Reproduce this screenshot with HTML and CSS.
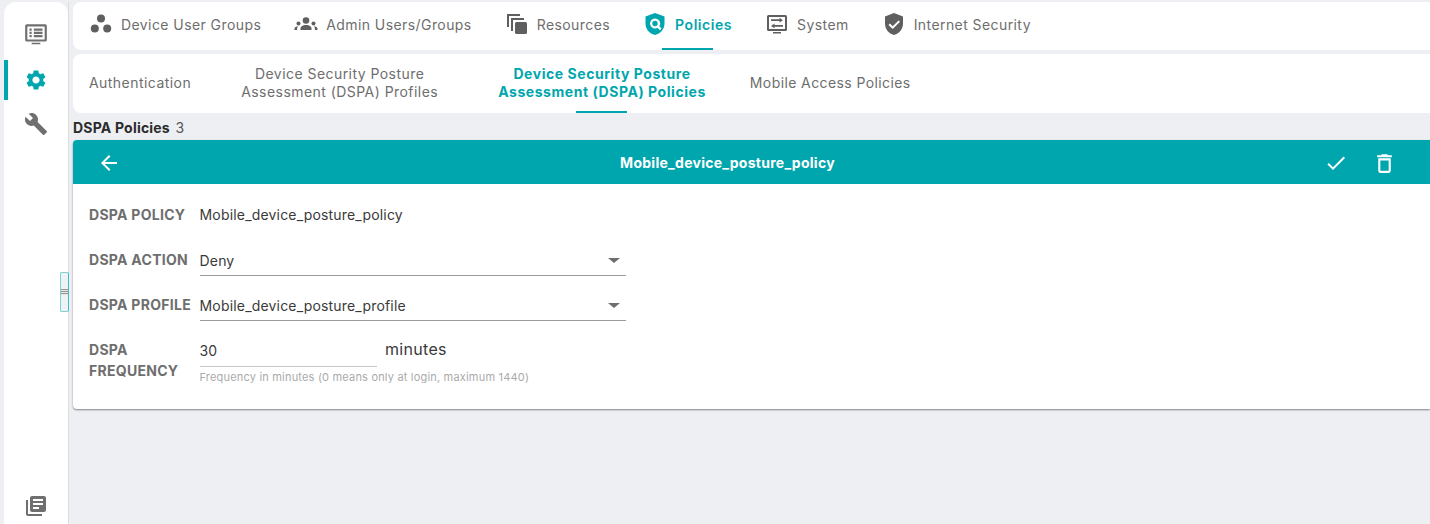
FILE: index.html
```html
<!DOCTYPE html>
<html lang="en">
<head>
  <meta charset="UTF-8" />
  <title>DSPA Policies</title>
  <link rel="stylesheet" href="styles.css">
</head>
<body>

<aside class="sidebar">
  <div class="side-top">
    <a class="side-item">
      <svg class="side-icon wide" viewBox="0 0 24 24"><path d="M3.500 3h17A1.500 1.500 0 0 1 22 4.500v13a1.500 1.500 0 0 1-1.500 1.500h-17A1.500 1.500 0 0 1 2 17.500v-13A1.500 1.500 0 0 1 3.500 3zM4 5v12h16V5zM6 7h2v2H6zM10 7h8v2h-8zM6 10h2v2H6zM10 10h8v2h-8zM6 13h2v2H6zM10 13h8v2h-8zM8 20h8v1.500H8z"/></svg>
    </a>
    <a class="side-item active">
      <svg class="side-icon" viewBox="0 0 24 24"><path d="M19.140 12.940c.04-.3.06-.61.06-.94 0-.32-.02-.64-.07-.94l2.030-1.580c.18-.14.23-.41.12-.61l-1.920-3.320c-.12-.22-.37-.29-.59-.22l-2.390.96c-.5-.38-1.030-.7-1.620-.94l-.36-2.540c-.04-.24-.24-.41-.48-.41h-3.840c-.24 0-.43.17-.47.41l-.36 2.540c-.59.24-1.130.57-1.620.94l-2.390-.96c-.22-.08-.47 0-.59.22L2.740 8.870c-.12.21-.08.47.12.61l2.030 1.580c-.05.3-.09.63-.09.94s.02.64.07.94l-2.030 1.580c-.18.14-.23.41-.12.61l1.920 3.320c.12.22.37.29.59.22l2.390-.96c.5.38 1.030.7 1.620.94l.36 2.540c.05.24.24.41.48.41h3.840c.24 0 .44-.17.47-.41l.36-2.540c.59-.24 1.130-.56 1.620-.94l2.390.96c.22.08.47 0 .59-.22l1.920-3.320c.12-.22.07-.47-.12-.61l-2.010-1.580zM12 15.600c-1.980 0-3.600-1.620-3.600-3.600s1.620-3.600 3.600-3.600 3.600 1.620 3.600 3.600-1.620 3.600-3.600 3.600z"/></svg>
    </a>
    <a class="side-item">
      <svg class="side-icon" viewBox="0 0 24 24"><path d="M22.700 19l-9.100-9.100c.9-2.300.4-5-1.500-6.900-2-2-5-2.400-7.400-1.300L9 6 6 9 1.600 4.700C.4 7.100.9 10.100 2.900 12.100c1.900 1.900 4.600 2.400 6.900 1.500l9.100 9.100c.4.4 1 .4 1.400 0l2.300-2.300c.5-.4.5-1.100.1-1.400z"/></svg>
    </a>
  </div>
  <a class="side-item side-bottom">
    <svg class="side-icon" viewBox="0 0 24 24"><path d="M4 6H2v14c0 1.100.9 2 2 2h14v-2H4V6zm16-4H8c-1.100 0-2 .9-2 2v12c0 1.100.9 2 2 2h12c1.100 0 2-.9 2-2V4c0-1.100-.9-2-2-2zm-1 9H9V9h10v2zm-4 4H9v-2h6v2zm4-8H9V5h10v2z"/></svg>
  </a>
  <div class="handle"><span></span></div>
</aside>

<main class="main">
  <nav class="topnav">
    <a class="top-tab">
      <svg class="top-icon" viewBox="0 0 24 24"><circle cx="12" cy="6.500" r="4"/><circle cx="5.800" cy="16.500" r="4"/><circle cx="18.200" cy="16.500" r="4"/></svg>
      Device User Groups
    </a>
    <a class="top-tab">
      <svg class="top-icon" viewBox="0 0 24 24"><circle cx="12" cy="8.500" r="3.300"/><path d="M6.500 18v-1.500c0-2 2.500-3.500 5.500-3.500s5.500 1.500 5.500 3.500V18z"/><circle cx="4.500" cy="11.500" r="2"/><path d="M.5 18v-1.200c0-1.400 1.400-2.400 3.600-2.500-.6.600-1 1.400-1 2.300V18z"/><circle cx="19.500" cy="11.500" r="2"/><path d="M23.500 18v-1.200c0-1.400-1.400-2.400-3.600-2.500.6.600 1 1.400 1 2.300V18z"/></svg>
      Admin Users/Groups
    </a>
    <a class="top-tab">
      <svg class="top-icon" viewBox="0 0 24 24"><path d="M2 2h13v2H4v11H2z"/><path d="M6 6h13v2H8v11H6z"/><rect x="10" y="10" width="12" height="12" rx="1.500"/></svg>
      Resources
    </a>
    <a class="top-tab active">
      <svg class="top-icon" viewBox="0 0 24 24"><path fill-rule="evenodd" d="M12 1l9.500 3.600v7.200c0 5.400-4 9.900-9.500 11.200-5.500-1.300-9.500-5.800-9.500-11.200V4.600zM12 6.500a5 5 0 1 0 2.600 9.300l2.400 2.400 1.600-1.600-2.300-2.300A5 5 0 0 0 12 6.500zm0 2.300a2.700 2.700 0 1 1 0 5.400 2.700 2.700 0 0 1 0-5.400z"/></svg>
      Policies
    </a>
    <a class="top-tab">
      <svg class="top-icon" viewBox="0 0 24 24"><path d="M3.500 3h17A1.500 1.500 0 0 1 22 4.500v13a1.500 1.500 0 0 1-1.500 1.500h-17A1.500 1.500 0 0 1 2 17.500v-13A1.500 1.500 0 0 1 3.500 3zM4 5v12h16V5zM8 20h8v1.500H8z"/><path d="M6 7.300h8.500V5.800L18 8.200l-3.500 2.400V9H6zM18 13h-8.500v-1.500L6 13.900l3.500 2.400v-1.600H18z"/></svg>
      System
    </a>
    <a class="top-tab">
      <svg class="top-icon" viewBox="0 0 24 24"><path fill-rule="evenodd" d="M12 1l9 3.400v7.400c0 5.400-3.800 9.900-9 11.200-5.200-1.300-9-5.800-9-11.200V4.400zm4.600 7.400L10.700 14.300 7.900 11.500 6.500 12.900l4.200 4.200 7.300-7.300z"/></svg>
      Internet Security
    </a>
  </nav>

  <nav class="subnav">
    <a class="sub-tab sub-auth">Authentication</a>
    <a class="sub-tab sub-prof">Device Security Posture<br>Assessment (DSPA) Profiles</a>
    <a class="sub-tab sub-pol active">Device Security Posture<br>Assessment (DSPA) Policies</a>
    <a class="sub-tab sub-mob">Mobile Access Policies</a>
  </nav>

  <h1 class="list-title">DSPA Policies <span class="count">3</span></h1>

  <section class="card">
    <header class="card-head">
      <svg class="head-icon back" viewBox="0 0 24 24"><path d="M20 11H7.830l5.590-5.590L12 4l-8 8 8 8 1.410-1.410L7.830 13H20v-2z"/></svg>
      <span class="card-title">Mobile_device_posture_policy</span>
      <svg class="head-icon check" viewBox="0 0 24 24"><path d="M9 16.170L4.830 12l-1.420 1.410L9 19 21 7l-1.410-1.410z"/></svg>
      <svg class="head-icon trash" viewBox="0 0 24 24"><path d="M6 19c0 1.100.9 2 2 2h8c1.100 0 2-.9 2-2V7H6v12zM8 9h8v10H8V9zm7.500-5l-1-1h-5l-1 1H5v2h14V4z"/></svg>
    </header>
    <div class="card-body">
      <div class="row row-name">
        <label class="field-label">DSPA POLICY</label>
        <span class="field-value">Mobile_device_posture_policy</span>
      </div>
      <div class="row row-select">
        <label class="field-label">DSPA ACTION</label>
        <div class="select"><span class="field-value">Deny</span><i class="caret"></i></div>
      </div>
      <div class="row row-select">
        <label class="field-label">DSPA PROFILE</label>
        <div class="select"><span class="field-value">Mobile_device_posture_profile</span><i class="caret"></i></div>
      </div>
      <div class="row row-freq">
        <label class="field-label freq-label">DSPA FREQUENCY</label>
        <div class="freq">
          <div class="freq-line">
            <div class="freq-input">30</div>
            <span class="unit">minutes</span>
          </div>
          <p class="hint">Frequency in minutes (0 means only at login, maximum 1440)</p>
        </div>
      </div>
    </div>
  </section>
</main>

</body>
</html>
```

FILE: styles.css
```css
* {
  box-sizing: border-box;
}
html, body {
  height: 100%;
}
body {
  margin: 0;
  display: flex;
  overflow: hidden;
  font-family: Inter, "Liberation Sans", sans-serif;
  background-color: #eeeff3;
  color: #333;
}

/* left rail */
.sidebar {
  position: relative;
  width: 64px;
  margin: 2px 0 0 4px;
  background: #fff;
  border-radius: 12px 12px 0 0;
  display: flex;
  flex-direction: column;
  justify-content: space-between;
  flex-shrink: 0;
}
.sidebar::after {
  content: "";
  position: absolute;
  top: 0;
  bottom: 0;
  right: -1px;
  width: 1px;
  background: #dcdde0;
}
.side-top {
  padding-top: 10px;
}
.side-item {
  display: flex;
  align-items: center;
  justify-content: center;
  height: 44px;
  fill: #6f6f6f;
}
.side-item.active {
  height: 40px;
  margin: 4px 0 2px;
  fill: #00a6ad;
  border-left: 4px solid #00a6ad;
  padding-right: 4px;
}
.side-icon {
  width: 24px;
  height: 24px;
}
.side-icon.wide {
  width: 26px;
  height: 26px;
}
.side-bottom {
  height: 36px;
}
.handle {
  position: absolute;
  top: 270px;
  left: 56px;
  width: 9px;
  height: 40px;
  background: #eef2f3;
  border: 1px solid #7fd0d4;
  border-right-color: #3fbcc1;
  border-radius: 2px;
  z-index: 2;
}
.handle span {
  display: block;
  height: 6px;
  margin-top: 16px;
  background: repeating-linear-gradient(#999 0, #999 1px, #e4e4e4 1px, #e4e4e4 2px);
}

.main {
  flex: 1;
  min-width: 0;
  margin-left: 5px;
  padding-top: 2px;
}

/* main tabs */
.topnav {
  display: flex;
  gap: 33px;
  height: 48px;
  padding-left: 16px;
  background: #fff;
  border-radius: 8px 0 0 8px;
}
.top-tab {
  position: relative;
  display: flex;
  align-items: center;
  padding-bottom: 4px;
  font-size: 14px;
  letter-spacing: .42px;
  color: #6e6e6e;
  fill: #5f5f5f;
  white-space: nowrap;
}
.top-icon {
  width: 24px;
  height: 24px;
  margin-right: 8px;
}
.top-tab.active {
  color: #00a6ad;
  fill: #00a6ad;
  font-weight: 600;
  letter-spacing: .55px;
}
.top-tab.active::after {
  content: "";
  position: absolute;
  left: 19px;
  width: 51px;
  bottom: 0;
  height: 2px;
  background: #00a6ad;
}

/* sub tabs */
.subnav {
  display: flex;
  height: 59px;
  margin-top: 4px;
  background: #fff;
  border-radius: 8px 0 0 8px;
}
.sub-tab {
  position: relative;
  display: flex;
  align-items: center;
  padding-bottom: 2px;
  text-align: center;
  font-size: 14px;
  line-height: 18px;
  letter-spacing: .45px;
  color: #6e6e6e;
  white-space: nowrap;
}
.sub-auth { margin-left: 16px; }
.sub-prof { margin-left: 50px; }
.sub-pol { margin-left: 60px; }
.sub-mob {
  margin-left: 44px;
  letter-spacing: .4px;
}
.sub-tab.active {
  color: #00a6ad;
  font-weight: 700;
  letter-spacing: .55px;
}
.sub-tab.active::after {
  content: "";
  position: absolute;
  left: 78px;
  width: 51px;
  bottom: 0;
  height: 2px;
  background: #00a6ad;
}

.list-title {
  margin: 0;
  height: 27px;
  padding-top: 6px;
  font-size: 14px;
  line-height: 17px;
  font-weight: 700;
  letter-spacing: .2px;
  color: #2b2b2b;
}
.count {
  margin-left: 2px;
  font-weight: 400;
  color: #555;
}

/* policy card */
.card {
  height: 269px;
  background: #fff;
  border-radius: 4px 0 0 4px;
  box-shadow: 0 1px 2px rgba(0,0,0,.45);
}
.card-head {
  display: flex;
  align-items: center;
  height: 44px;
  background: #00a6ad;
  border-radius: 4px 0 0 0;
  fill: #fff;
}
.head-icon {
  width: 24px;
  height: 24px;
  margin-top: 2px;
  flex-shrink: 0;
}
.back { margin-left: 24px; }
.card-title {
  flex: 1;
  padding-left: 10px;
  text-align: center;
  font-size: 14px;
  font-weight: 700;
  letter-spacing: .27px;
  color: #fff;
}
.trash {
  width: 25px;
  height: 25px;
  margin: 2px 33px 0 24px;
}

.card-body {
  padding: 8px 0 0 16px;
}
.row {
  display: flex;
  align-items: center;
}
.row-name {
  height: 44px;
}
.row-select {
  height: 46px;
}
.row-select + .row-select {
  height: 45px;
}
.row-name + .row-select .select {
  margin-top: 3px;
  padding-top: 0;
}
.field-label {
  width: 110.5px;
  flex-shrink: 0;
  font-size: 14px;
  font-weight: 700;
  letter-spacing: .28px;
  color: #6e6e6e;
}
.field-value {
  font-size: 14px;
  letter-spacing: .18px;
  color: #3a3a3a;
}
.select {
  display: flex;
  align-items: center;
  justify-content: space-between;
  width: 426.5px;
  height: 31px;
  margin-top: 1px;
  padding: 2px 6px 0 0;
  border-bottom: 1px solid #9a9a9a;
}
.caret {
  width: 0;
  height: 0;
  border-left: 6px solid transparent;
  border-right: 6px solid transparent;
  border-top: 5px solid #6e6e6e;
}
.row-freq {
  align-items: flex-start;
  margin-top: 8px;
}
.freq-label {
  line-height: 21px;
  padding-right: 30px;
  margin-top: 4px;
}
.freq-line {
  display: flex;
  align-items: flex-start;
}
.freq-input {
  width: 177px;
  height: 32px;
  padding-top: 7px;
  font-size: 14px;
  line-height: 17px;
  color: #3a3a3a;
  border-bottom: 1px solid #c8c8c8;
}
.unit {
  margin-left: 8.500px;
  margin-top: 6px;
  font-size: 16px;
  line-height: 17px;
  letter-spacing: .3px;
  color: #3a3a3a;
}
.hint {
  margin: 3px 0 0;
  font-size: 11px;
  line-height: 14px;
  letter-spacing: .19px;
  color: #aaa;
}
```
